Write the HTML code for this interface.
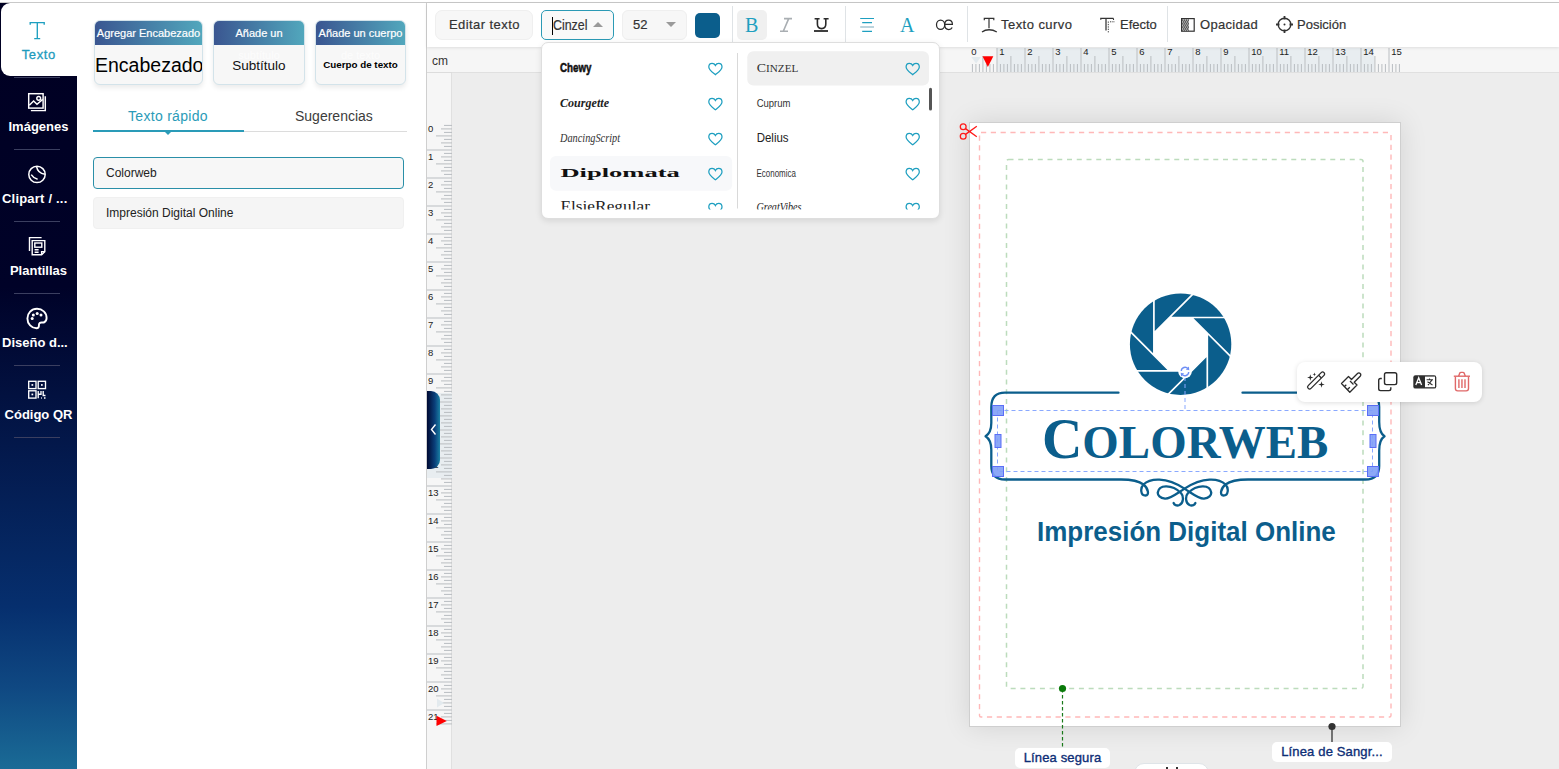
<!DOCTYPE html>
<html><head><meta charset="utf-8">
<style>
*{box-sizing:border-box;margin:0;padding:0}
html,body{width:1559px;height:769px;overflow:hidden;background:#fff;font-family:"Liberation Sans",sans-serif;position:relative}
.a{position:absolute}
#topline{left:0;top:2px;width:1559px;height:1px;background:#c9c9c9}
#sb{left:0;top:3px;width:77px;height:766px;background:linear-gradient(to bottom,#000022 0px,#000228 284px,#03184b 444px,#062f6e 604px,#0f4882 684px,#1a6b96 766px)}
#tab{left:1px;top:3px;width:76px;height:73px;background:#fff;border-radius:9px 0 0 9px}
.sep{left:14px;width:46px;height:1px;background:#3b3f60}
.lbl{left:0;width:77px;text-align:center;color:#fff;font-weight:bold;font-size:13px;white-space:nowrap}
#panel{left:77px;top:3px;width:349px;height:766px;background:#fff}
#vline{left:426px;top:3px;width:1px;height:766px;background:#cfcfcf}
#work{left:427px;top:47px;width:1132px;height:722px;background:#ededed}
#toolbar{left:427px;top:3px;width:1132px;height:44px;background:#fff;box-shadow:0 1px 3px rgba(0,0,0,.10)}

.card{top:20px;height:65px;border:1px solid #d3e3ea;border-radius:6px;background:#f7f7f7;overflow:hidden;box-shadow:0 3px 5px rgba(0,0,0,.08)}
.ch{height:25px;background:linear-gradient(to right,#3a5590,#52a8bd);color:#fff;font-size:11px;text-align:center;line-height:27px;white-space:nowrap;margin:-1px -1px 0 -1px;-webkit-text-stroke:.2px #fff}
.cb{position:relative;text-align:center;white-space:nowrap}
.ov{position:absolute;left:0;right:0;top:4px;color:#fff;opacity:.7;font-size:11px;font-weight:normal}

.tt{font-size:13px;color:#333;white-space:nowrap;line-height:15px;-webkit-text-stroke:.2px #333}
.vsep{top:6px;width:1px;height:36px;background:#dfe3e6}

.lab{background:#fff;border-radius:5px;font-size:13px;color:#0d2e76;text-align:center;line-height:20px;white-space:nowrap;letter-spacing:.15px;-webkit-text-stroke:.35px #0d2e76}
</style></head>
<body>
<div class="a" id="topline"></div>
<div class="a" id="sb"></div>
<div class="a" id="tab"></div>
<div class="a sep" style="top:77px"></div>
<div class="a sep" style="top:149px"></div>
<div class="a sep" style="top:221px"></div>
<div class="a sep" style="top:293px"></div>
<div class="a sep" style="top:365px"></div>
<div class="a sep" style="top:437px"></div>
<svg class="a" style="left:0;top:0" width="77" height="440" viewBox="0 0 77 440">
<path d="M30.2 24.8 V22.6 H44.2 V24.8 M37.3 22.6 V38.6 M34.2 38.6 H40.2" fill="none" stroke="#1e9fc0" stroke-width="1.35"/>
<g fill="none" stroke="#fff" stroke-width="1.45">
 <rect x="28.7" y="93.7" width="14.4" height="14.4"/>
 <path d="M45.3 96.2 V110.6 H30.9"/>
 <path d="M29.3 105.2 L33.6 101 L37 104.2 L42.7 99.4"/>
 <circle cx="38.7" cy="98.3" r="1.9"/>
</g>
<g fill="none" stroke="#fff" stroke-width="1.5">
 <circle cx="37" cy="174.4" r="8.2"/>
 <path d="M36.6 166.6 C37.2 170.6 40.5 173.5 44.9 174.2"/>
 <path d="M31.2 174.6 C32.6 176.8 34.9 178.5 37.6 179.2"/>
</g>
<g fill="none" stroke="#fff" stroke-width="1.4">
 <path d="M29.5 251 V237.6 H41.6"/>
 <path d="M32.2 240.6 H44.8 V251.6 L41.6 254.8 H32.2 Z"/>
 <path d="M44.8 251.6 H41.6 V254.8"/>
 <rect x="34.8" y="243" width="7" height="4.2"/>
 <path d="M34.6 249.8 H38.6 M34.6 252.2 H38.6"/>
</g>
<g fill="none" stroke="#fff" stroke-width="1.9">
 <path d="M43.8 322.5 C45.5 321.8 46.6 320.2 46.6 318 C46.6 312.5 42.3 308.8 37 308.8 C31.5 308.8 27.4 313 27.4 318.4 C27.4 323.8 31.6 328.2 36.5 328.2 C38.2 328.2 39 327.2 38.9 325.8 C38.7 323.2 40.2 322.2 42.2 322.5 Z"/>
</g>
<g fill="#fff">
 <circle cx="33.3" cy="314.9" r="1.5"/><circle cx="37.2" cy="313.6" r="1.5"/><circle cx="41" cy="314.9" r="1.5"/><circle cx="32.2" cy="318.6" r="1.5"/>
</g>
<g fill="none" stroke="#fff" stroke-width="1.35">
 <rect x="28.7" y="381.3" width="7.3" height="7.3"/>
 <rect x="38.2" y="381.3" width="7.3" height="7.3"/>
 <rect x="28.7" y="390.8" width="7.3" height="7.3"/>
 <path d="M38.2 391 V398.3 M38.2 394.2 H41 V391 M43.2 391 V395.5 H45.5 M41 398 H41.8 M44 398 H45.5"/>
</g>
<g fill="#fff"><rect x="31.5" y="384.1" width="1.7" height="1.7"/><rect x="41" y="384.1" width="1.7" height="1.7"/><rect x="31.5" y="393.6" width="1.7" height="1.7"/></g>
</svg>
<div class="a lbl" style="top:47px;color:#1e9bbd;font-weight:normal;letter-spacing:.6px;text-indent:.6px;-webkit-text-stroke:.3px #1e9bbd">Texto</div>
<div class="a lbl" style="top:119px">Imágenes</div>
<div class="a lbl" style="top:191px;text-align:left;left:2px;letter-spacing:.2px">Clipart / ...</div>
<div class="a lbl" style="top:263px">Plantillas</div>
<div class="a lbl" style="top:335px;text-align:left;left:2px">Diseño d...</div>
<div class="a lbl" style="top:407px">Código QR</div>

<div class="a" id="panel"></div>

<!-- cards -->
<div class="a card" style="left:94px;width:109px"><div class="ch">Agregar Encabezado</div><div class="cb" style="font-size:19.5px;color:#000;padding-top:9px;font-family:'Liberation Sans',sans-serif">Encabezado</div></div>
<div class="a card" style="left:213px;width:92px"><div class="ch">Añade un</div><div class="cb" style="font-size:13.5px;color:#111;padding-top:13px"><span class="ov">subtítulo</span>Subtítulo</div></div>
<div class="a card" style="left:315px;width:91px"><div class="ch">Añade un cuerpo</div><div class="cb" style="font-size:9.8px;font-weight:bold;color:#000;padding-top:14px"><span class="ov">de texto</span>Cuerpo de texto</div></div>
<!-- tabs -->
<div class="a" style="left:93px;top:131px;width:314px;height:1px;background:#dcdcdc"></div>
<div class="a" style="left:93px;top:130px;width:151px;height:2px;background:#2a9bb8"></div>
<div class="a" style="left:164px;top:131px;width:0;height:0;border-left:4px solid transparent;border-right:4px solid transparent;border-top:4px solid #2a9bb8"></div>
<div class="a" style="left:128px;top:108px;font-size:14px;letter-spacing:.3px;color:#2a9bb8">Texto rápido</div>
<div class="a" style="left:295px;top:108px;font-size:14px;color:#3c3c3c">Sugerencias</div>
<!-- inputs -->
<div class="a" style="left:93px;top:157px;width:311px;height:32px;border:1px solid #2a8fa8;border-radius:4px;background:#f7f7f7"></div>
<div class="a" style="left:106px;top:166px;font-size:12px;color:#222">Colorweb</div>
<div class="a" style="left:93px;top:197px;width:311px;height:32px;border:1px solid #f0f0f0;border-radius:4px;background:#f5f5f5"></div>
<div class="a" style="left:106px;top:206px;font-size:12px;color:#222">Impresión Digital Online</div>
<div class="a" id="vline"></div>
<div class="a" id="work"></div>
<div class="a" style="left:427px;top:47px;width:1132px;height:26px;background:#f6f6f6;border-bottom:1px solid #e0e0e0"></div>
<div class="a" style="left:997px;top:48px;width:377px;height:24px;background:#e8edf0"></div>
<div class="a" style="left:427px;top:47px;width:25px;height:26px;background:#f6f6f6;border-bottom:1px solid #dcdcdc"></div>
<div class="a" style="left:432px;top:53.5px;font-size:12px;color:#333;line-height:14px">cm</div>
<div class="a" style="left:427px;top:73px;width:25px;height:696px;background:#f6f6f6;border-right:1px solid #e0e0e0"></div>
<div class="a" style="left:427px;top:393px;width:25px;height:85px;background:#e8edf0"></div>
<svg class="a" style="left:0;top:0" width="1559" height="769" viewBox="0 0 1559 769">
<rect x="971.9" y="64" width="1" height="8" fill="#b9bdc1"/>
<rect x="975.4" y="64" width="1" height="8" fill="#b9bdc1"/>
<rect x="978.9" y="64" width="1" height="8" fill="#b9bdc1"/>
<rect x="982.4" y="56" width="1" height="16" fill="#b9bdc1"/>
<rect x="985.9" y="64" width="1" height="8" fill="#b9bdc1"/>
<rect x="989.4" y="64" width="1" height="8" fill="#b9bdc1"/>
<rect x="992.9" y="64" width="1" height="8" fill="#b9bdc1"/>
<text x="971.2" y="55" font-size="9.5" fill="#222" font-family="Liberation Sans">0</text>
<rect x="996.4" y="48" width="1.2" height="24" fill="#c4c7ca"/>
<rect x="999.9" y="64" width="1" height="8" fill="#b9bdc1"/>
<rect x="1003.4" y="64" width="1" height="8" fill="#b9bdc1"/>
<rect x="1006.9" y="64" width="1" height="8" fill="#b9bdc1"/>
<rect x="1010.4" y="56" width="1" height="16" fill="#b9bdc1"/>
<rect x="1013.9" y="64" width="1" height="8" fill="#b9bdc1"/>
<rect x="1017.4" y="64" width="1" height="8" fill="#b9bdc1"/>
<rect x="1020.9" y="64" width="1" height="8" fill="#b9bdc1"/>
<text x="999.2" y="55" font-size="9.5" fill="#222" font-family="Liberation Sans">1</text>
<rect x="1024.4" y="48" width="1.2" height="24" fill="#c4c7ca"/>
<rect x="1027.9" y="64" width="1" height="8" fill="#b9bdc1"/>
<rect x="1031.4" y="64" width="1" height="8" fill="#b9bdc1"/>
<rect x="1034.9" y="64" width="1" height="8" fill="#b9bdc1"/>
<rect x="1038.4" y="56" width="1" height="16" fill="#b9bdc1"/>
<rect x="1041.9" y="64" width="1" height="8" fill="#b9bdc1"/>
<rect x="1045.4" y="64" width="1" height="8" fill="#b9bdc1"/>
<rect x="1048.9" y="64" width="1" height="8" fill="#b9bdc1"/>
<text x="1027.2" y="55" font-size="9.5" fill="#222" font-family="Liberation Sans">2</text>
<rect x="1052.4" y="48" width="1.2" height="24" fill="#c4c7ca"/>
<rect x="1055.9" y="64" width="1" height="8" fill="#b9bdc1"/>
<rect x="1059.4" y="64" width="1" height="8" fill="#b9bdc1"/>
<rect x="1062.9" y="64" width="1" height="8" fill="#b9bdc1"/>
<rect x="1066.4" y="56" width="1" height="16" fill="#b9bdc1"/>
<rect x="1069.9" y="64" width="1" height="8" fill="#b9bdc1"/>
<rect x="1073.4" y="64" width="1" height="8" fill="#b9bdc1"/>
<rect x="1076.9" y="64" width="1" height="8" fill="#b9bdc1"/>
<text x="1055.2" y="55" font-size="9.5" fill="#222" font-family="Liberation Sans">3</text>
<rect x="1080.4" y="48" width="1.2" height="24" fill="#c4c7ca"/>
<rect x="1083.9" y="64" width="1" height="8" fill="#b9bdc1"/>
<rect x="1087.4" y="64" width="1" height="8" fill="#b9bdc1"/>
<rect x="1090.9" y="64" width="1" height="8" fill="#b9bdc1"/>
<rect x="1094.4" y="56" width="1" height="16" fill="#b9bdc1"/>
<rect x="1097.9" y="64" width="1" height="8" fill="#b9bdc1"/>
<rect x="1101.4" y="64" width="1" height="8" fill="#b9bdc1"/>
<rect x="1104.9" y="64" width="1" height="8" fill="#b9bdc1"/>
<text x="1083.2" y="55" font-size="9.5" fill="#222" font-family="Liberation Sans">4</text>
<rect x="1108.4" y="48" width="1.2" height="24" fill="#c4c7ca"/>
<rect x="1111.9" y="64" width="1" height="8" fill="#b9bdc1"/>
<rect x="1115.4" y="64" width="1" height="8" fill="#b9bdc1"/>
<rect x="1118.9" y="64" width="1" height="8" fill="#b9bdc1"/>
<rect x="1122.4" y="56" width="1" height="16" fill="#b9bdc1"/>
<rect x="1125.9" y="64" width="1" height="8" fill="#b9bdc1"/>
<rect x="1129.4" y="64" width="1" height="8" fill="#b9bdc1"/>
<rect x="1132.9" y="64" width="1" height="8" fill="#b9bdc1"/>
<text x="1111.2" y="55" font-size="9.5" fill="#222" font-family="Liberation Sans">5</text>
<rect x="1136.4" y="48" width="1.2" height="24" fill="#c4c7ca"/>
<rect x="1139.9" y="64" width="1" height="8" fill="#b9bdc1"/>
<rect x="1143.4" y="64" width="1" height="8" fill="#b9bdc1"/>
<rect x="1146.9" y="64" width="1" height="8" fill="#b9bdc1"/>
<rect x="1150.4" y="56" width="1" height="16" fill="#b9bdc1"/>
<rect x="1153.9" y="64" width="1" height="8" fill="#b9bdc1"/>
<rect x="1157.4" y="64" width="1" height="8" fill="#b9bdc1"/>
<rect x="1160.9" y="64" width="1" height="8" fill="#b9bdc1"/>
<text x="1139.2" y="55" font-size="9.5" fill="#222" font-family="Liberation Sans">6</text>
<rect x="1164.4" y="48" width="1.2" height="24" fill="#c4c7ca"/>
<rect x="1167.9" y="64" width="1" height="8" fill="#b9bdc1"/>
<rect x="1171.4" y="64" width="1" height="8" fill="#b9bdc1"/>
<rect x="1174.9" y="64" width="1" height="8" fill="#b9bdc1"/>
<rect x="1178.4" y="56" width="1" height="16" fill="#b9bdc1"/>
<rect x="1181.9" y="64" width="1" height="8" fill="#b9bdc1"/>
<rect x="1185.4" y="64" width="1" height="8" fill="#b9bdc1"/>
<rect x="1188.9" y="64" width="1" height="8" fill="#b9bdc1"/>
<text x="1167.2" y="55" font-size="9.5" fill="#222" font-family="Liberation Sans">7</text>
<rect x="1192.4" y="48" width="1.2" height="24" fill="#c4c7ca"/>
<rect x="1195.9" y="64" width="1" height="8" fill="#b9bdc1"/>
<rect x="1199.4" y="64" width="1" height="8" fill="#b9bdc1"/>
<rect x="1202.9" y="64" width="1" height="8" fill="#b9bdc1"/>
<rect x="1206.4" y="56" width="1" height="16" fill="#b9bdc1"/>
<rect x="1209.9" y="64" width="1" height="8" fill="#b9bdc1"/>
<rect x="1213.4" y="64" width="1" height="8" fill="#b9bdc1"/>
<rect x="1216.9" y="64" width="1" height="8" fill="#b9bdc1"/>
<text x="1195.2" y="55" font-size="9.5" fill="#222" font-family="Liberation Sans">8</text>
<rect x="1220.4" y="48" width="1.2" height="24" fill="#c4c7ca"/>
<rect x="1223.9" y="64" width="1" height="8" fill="#b9bdc1"/>
<rect x="1227.4" y="64" width="1" height="8" fill="#b9bdc1"/>
<rect x="1230.9" y="64" width="1" height="8" fill="#b9bdc1"/>
<rect x="1234.4" y="56" width="1" height="16" fill="#b9bdc1"/>
<rect x="1237.9" y="64" width="1" height="8" fill="#b9bdc1"/>
<rect x="1241.4" y="64" width="1" height="8" fill="#b9bdc1"/>
<rect x="1244.9" y="64" width="1" height="8" fill="#b9bdc1"/>
<text x="1223.2" y="55" font-size="9.5" fill="#222" font-family="Liberation Sans">9</text>
<rect x="1248.4" y="48" width="1.2" height="24" fill="#c4c7ca"/>
<rect x="1251.9" y="64" width="1" height="8" fill="#b9bdc1"/>
<rect x="1255.4" y="64" width="1" height="8" fill="#b9bdc1"/>
<rect x="1258.9" y="64" width="1" height="8" fill="#b9bdc1"/>
<rect x="1262.4" y="56" width="1" height="16" fill="#b9bdc1"/>
<rect x="1265.9" y="64" width="1" height="8" fill="#b9bdc1"/>
<rect x="1269.4" y="64" width="1" height="8" fill="#b9bdc1"/>
<rect x="1272.9" y="64" width="1" height="8" fill="#b9bdc1"/>
<text x="1251.2" y="55" font-size="9.5" fill="#222" font-family="Liberation Sans">10</text>
<rect x="1276.4" y="48" width="1.2" height="24" fill="#c4c7ca"/>
<rect x="1279.9" y="64" width="1" height="8" fill="#b9bdc1"/>
<rect x="1283.4" y="64" width="1" height="8" fill="#b9bdc1"/>
<rect x="1286.9" y="64" width="1" height="8" fill="#b9bdc1"/>
<rect x="1290.4" y="56" width="1" height="16" fill="#b9bdc1"/>
<rect x="1293.9" y="64" width="1" height="8" fill="#b9bdc1"/>
<rect x="1297.4" y="64" width="1" height="8" fill="#b9bdc1"/>
<rect x="1300.9" y="64" width="1" height="8" fill="#b9bdc1"/>
<text x="1279.2" y="55" font-size="9.5" fill="#222" font-family="Liberation Sans">11</text>
<rect x="1304.4" y="48" width="1.2" height="24" fill="#c4c7ca"/>
<rect x="1307.9" y="64" width="1" height="8" fill="#b9bdc1"/>
<rect x="1311.4" y="64" width="1" height="8" fill="#b9bdc1"/>
<rect x="1314.9" y="64" width="1" height="8" fill="#b9bdc1"/>
<rect x="1318.4" y="56" width="1" height="16" fill="#b9bdc1"/>
<rect x="1321.9" y="64" width="1" height="8" fill="#b9bdc1"/>
<rect x="1325.4" y="64" width="1" height="8" fill="#b9bdc1"/>
<rect x="1328.9" y="64" width="1" height="8" fill="#b9bdc1"/>
<text x="1307.2" y="55" font-size="9.5" fill="#222" font-family="Liberation Sans">12</text>
<rect x="1332.4" y="48" width="1.2" height="24" fill="#c4c7ca"/>
<rect x="1335.9" y="64" width="1" height="8" fill="#b9bdc1"/>
<rect x="1339.4" y="64" width="1" height="8" fill="#b9bdc1"/>
<rect x="1342.9" y="64" width="1" height="8" fill="#b9bdc1"/>
<rect x="1346.4" y="56" width="1" height="16" fill="#b9bdc1"/>
<rect x="1349.9" y="64" width="1" height="8" fill="#b9bdc1"/>
<rect x="1353.4" y="64" width="1" height="8" fill="#b9bdc1"/>
<rect x="1356.9" y="64" width="1" height="8" fill="#b9bdc1"/>
<text x="1335.2" y="55" font-size="9.5" fill="#222" font-family="Liberation Sans">13</text>
<rect x="1360.4" y="48" width="1.2" height="24" fill="#c4c7ca"/>
<rect x="1363.9" y="64" width="1" height="8" fill="#b9bdc1"/>
<rect x="1367.4" y="64" width="1" height="8" fill="#b9bdc1"/>
<rect x="1370.9" y="64" width="1" height="8" fill="#b9bdc1"/>
<rect x="1374.4" y="56" width="1" height="16" fill="#b9bdc1"/>
<rect x="1377.9" y="64" width="1" height="8" fill="#b9bdc1"/>
<rect x="1381.4" y="64" width="1" height="8" fill="#b9bdc1"/>
<rect x="1384.9" y="64" width="1" height="8" fill="#b9bdc1"/>
<text x="1363.2" y="55" font-size="9.5" fill="#222" font-family="Liberation Sans">14</text>
<rect x="1388.4" y="48" width="1.2" height="24" fill="#c4c7ca"/>
<rect x="1391.9" y="64" width="1" height="8" fill="#b9bdc1"/>
<rect x="1395.4" y="64" width="1" height="8" fill="#b9bdc1"/>
<rect x="1398.9" y="64" width="1" height="8" fill="#b9bdc1"/>
<text x="1391.2" y="55" font-size="9.5" fill="#222" font-family="Liberation Sans">15</text>
<rect x="444" y="124.9" width="8" height="1" fill="#b9bdc1"/>
<rect x="441" y="128.4" width="11" height="1" fill="#b9bdc1"/>
<rect x="444" y="131.9" width="8" height="1" fill="#b9bdc1"/>
<rect x="436" y="135.4" width="16" height="1" fill="#b9bdc1"/>
<rect x="444" y="138.9" width="8" height="1" fill="#b9bdc1"/>
<rect x="441" y="142.4" width="11" height="1" fill="#b9bdc1"/>
<rect x="444" y="145.9" width="8" height="1" fill="#b9bdc1"/>
<text x="428" y="131.7" font-size="9.5" fill="#222" font-family="Liberation Sans">0</text>
<rect x="427" y="149.4" width="25" height="1.2" fill="#c4c7ca"/>
<rect x="444" y="152.9" width="8" height="1" fill="#b9bdc1"/>
<rect x="441" y="156.4" width="11" height="1" fill="#b9bdc1"/>
<rect x="444" y="159.9" width="8" height="1" fill="#b9bdc1"/>
<rect x="436" y="163.4" width="16" height="1" fill="#b9bdc1"/>
<rect x="444" y="166.9" width="8" height="1" fill="#b9bdc1"/>
<rect x="441" y="170.4" width="11" height="1" fill="#b9bdc1"/>
<rect x="444" y="173.9" width="8" height="1" fill="#b9bdc1"/>
<text x="428" y="159.7" font-size="9.5" fill="#222" font-family="Liberation Sans">1</text>
<rect x="427" y="177.4" width="25" height="1.2" fill="#c4c7ca"/>
<rect x="444" y="180.9" width="8" height="1" fill="#b9bdc1"/>
<rect x="441" y="184.4" width="11" height="1" fill="#b9bdc1"/>
<rect x="444" y="187.9" width="8" height="1" fill="#b9bdc1"/>
<rect x="436" y="191.4" width="16" height="1" fill="#b9bdc1"/>
<rect x="444" y="194.9" width="8" height="1" fill="#b9bdc1"/>
<rect x="441" y="198.4" width="11" height="1" fill="#b9bdc1"/>
<rect x="444" y="201.9" width="8" height="1" fill="#b9bdc1"/>
<text x="428" y="187.7" font-size="9.5" fill="#222" font-family="Liberation Sans">2</text>
<rect x="427" y="205.4" width="25" height="1.2" fill="#c4c7ca"/>
<rect x="444" y="208.9" width="8" height="1" fill="#b9bdc1"/>
<rect x="441" y="212.4" width="11" height="1" fill="#b9bdc1"/>
<rect x="444" y="215.9" width="8" height="1" fill="#b9bdc1"/>
<rect x="436" y="219.4" width="16" height="1" fill="#b9bdc1"/>
<rect x="444" y="222.9" width="8" height="1" fill="#b9bdc1"/>
<rect x="441" y="226.4" width="11" height="1" fill="#b9bdc1"/>
<rect x="444" y="229.9" width="8" height="1" fill="#b9bdc1"/>
<text x="428" y="215.7" font-size="9.5" fill="#222" font-family="Liberation Sans">3</text>
<rect x="427" y="233.4" width="25" height="1.2" fill="#c4c7ca"/>
<rect x="444" y="236.9" width="8" height="1" fill="#b9bdc1"/>
<rect x="441" y="240.4" width="11" height="1" fill="#b9bdc1"/>
<rect x="444" y="243.9" width="8" height="1" fill="#b9bdc1"/>
<rect x="436" y="247.4" width="16" height="1" fill="#b9bdc1"/>
<rect x="444" y="250.9" width="8" height="1" fill="#b9bdc1"/>
<rect x="441" y="254.4" width="11" height="1" fill="#b9bdc1"/>
<rect x="444" y="257.9" width="8" height="1" fill="#b9bdc1"/>
<text x="428" y="243.7" font-size="9.5" fill="#222" font-family="Liberation Sans">4</text>
<rect x="427" y="261.4" width="25" height="1.2" fill="#c4c7ca"/>
<rect x="444" y="264.9" width="8" height="1" fill="#b9bdc1"/>
<rect x="441" y="268.4" width="11" height="1" fill="#b9bdc1"/>
<rect x="444" y="271.9" width="8" height="1" fill="#b9bdc1"/>
<rect x="436" y="275.4" width="16" height="1" fill="#b9bdc1"/>
<rect x="444" y="278.9" width="8" height="1" fill="#b9bdc1"/>
<rect x="441" y="282.4" width="11" height="1" fill="#b9bdc1"/>
<rect x="444" y="285.9" width="8" height="1" fill="#b9bdc1"/>
<text x="428" y="271.7" font-size="9.5" fill="#222" font-family="Liberation Sans">5</text>
<rect x="427" y="289.4" width="25" height="1.2" fill="#c4c7ca"/>
<rect x="444" y="292.9" width="8" height="1" fill="#b9bdc1"/>
<rect x="441" y="296.4" width="11" height="1" fill="#b9bdc1"/>
<rect x="444" y="299.9" width="8" height="1" fill="#b9bdc1"/>
<rect x="436" y="303.4" width="16" height="1" fill="#b9bdc1"/>
<rect x="444" y="306.9" width="8" height="1" fill="#b9bdc1"/>
<rect x="441" y="310.4" width="11" height="1" fill="#b9bdc1"/>
<rect x="444" y="313.9" width="8" height="1" fill="#b9bdc1"/>
<text x="428" y="299.7" font-size="9.5" fill="#222" font-family="Liberation Sans">6</text>
<rect x="427" y="317.4" width="25" height="1.2" fill="#c4c7ca"/>
<rect x="444" y="320.9" width="8" height="1" fill="#b9bdc1"/>
<rect x="441" y="324.4" width="11" height="1" fill="#b9bdc1"/>
<rect x="444" y="327.9" width="8" height="1" fill="#b9bdc1"/>
<rect x="436" y="331.4" width="16" height="1" fill="#b9bdc1"/>
<rect x="444" y="334.9" width="8" height="1" fill="#b9bdc1"/>
<rect x="441" y="338.4" width="11" height="1" fill="#b9bdc1"/>
<rect x="444" y="341.9" width="8" height="1" fill="#b9bdc1"/>
<text x="428" y="327.7" font-size="9.5" fill="#222" font-family="Liberation Sans">7</text>
<rect x="427" y="345.4" width="25" height="1.2" fill="#c4c7ca"/>
<rect x="444" y="348.9" width="8" height="1" fill="#b9bdc1"/>
<rect x="441" y="352.4" width="11" height="1" fill="#b9bdc1"/>
<rect x="444" y="355.9" width="8" height="1" fill="#b9bdc1"/>
<rect x="436" y="359.4" width="16" height="1" fill="#b9bdc1"/>
<rect x="444" y="362.9" width="8" height="1" fill="#b9bdc1"/>
<rect x="441" y="366.4" width="11" height="1" fill="#b9bdc1"/>
<rect x="444" y="369.9" width="8" height="1" fill="#b9bdc1"/>
<text x="428" y="355.7" font-size="9.5" fill="#222" font-family="Liberation Sans">8</text>
<rect x="427" y="373.4" width="25" height="1.2" fill="#c4c7ca"/>
<rect x="444" y="376.9" width="8" height="1" fill="#b9bdc1"/>
<rect x="441" y="380.4" width="11" height="1" fill="#b9bdc1"/>
<rect x="444" y="383.9" width="8" height="1" fill="#b9bdc1"/>
<rect x="436" y="387.4" width="16" height="1" fill="#b9bdc1"/>
<rect x="444" y="390.9" width="8" height="1" fill="#b9bdc1"/>
<rect x="441" y="394.4" width="11" height="1" fill="#b9bdc1"/>
<rect x="444" y="397.9" width="8" height="1" fill="#b9bdc1"/>
<text x="428" y="383.7" font-size="9.5" fill="#222" font-family="Liberation Sans">9</text>
<rect x="427" y="401.4" width="25" height="1.2" fill="#c4c7ca"/>
<rect x="444" y="404.9" width="8" height="1" fill="#b9bdc1"/>
<rect x="441" y="408.4" width="11" height="1" fill="#b9bdc1"/>
<rect x="444" y="411.9" width="8" height="1" fill="#b9bdc1"/>
<rect x="436" y="415.4" width="16" height="1" fill="#b9bdc1"/>
<rect x="444" y="418.9" width="8" height="1" fill="#b9bdc1"/>
<rect x="441" y="422.4" width="11" height="1" fill="#b9bdc1"/>
<rect x="444" y="425.9" width="8" height="1" fill="#b9bdc1"/>
<text x="428" y="411.7" font-size="9.5" fill="#222" font-family="Liberation Sans">10</text>
<rect x="427" y="429.4" width="25" height="1.2" fill="#c4c7ca"/>
<rect x="444" y="432.9" width="8" height="1" fill="#b9bdc1"/>
<rect x="441" y="436.4" width="11" height="1" fill="#b9bdc1"/>
<rect x="444" y="439.9" width="8" height="1" fill="#b9bdc1"/>
<rect x="436" y="443.4" width="16" height="1" fill="#b9bdc1"/>
<rect x="444" y="446.9" width="8" height="1" fill="#b9bdc1"/>
<rect x="441" y="450.4" width="11" height="1" fill="#b9bdc1"/>
<rect x="444" y="453.9" width="8" height="1" fill="#b9bdc1"/>
<text x="428" y="439.7" font-size="9.5" fill="#222" font-family="Liberation Sans">11</text>
<rect x="427" y="457.4" width="25" height="1.2" fill="#c4c7ca"/>
<rect x="444" y="460.9" width="8" height="1" fill="#b9bdc1"/>
<rect x="441" y="464.4" width="11" height="1" fill="#b9bdc1"/>
<rect x="444" y="467.9" width="8" height="1" fill="#b9bdc1"/>
<rect x="436" y="471.4" width="16" height="1" fill="#b9bdc1"/>
<rect x="444" y="474.9" width="8" height="1" fill="#b9bdc1"/>
<rect x="441" y="478.4" width="11" height="1" fill="#b9bdc1"/>
<rect x="444" y="481.9" width="8" height="1" fill="#b9bdc1"/>
<text x="428" y="467.7" font-size="9.5" fill="#222" font-family="Liberation Sans">12</text>
<rect x="427" y="485.4" width="25" height="1.2" fill="#c4c7ca"/>
<rect x="444" y="488.9" width="8" height="1" fill="#b9bdc1"/>
<rect x="441" y="492.4" width="11" height="1" fill="#b9bdc1"/>
<rect x="444" y="495.9" width="8" height="1" fill="#b9bdc1"/>
<rect x="436" y="499.4" width="16" height="1" fill="#b9bdc1"/>
<rect x="444" y="502.9" width="8" height="1" fill="#b9bdc1"/>
<rect x="441" y="506.4" width="11" height="1" fill="#b9bdc1"/>
<rect x="444" y="509.9" width="8" height="1" fill="#b9bdc1"/>
<text x="428" y="495.7" font-size="9.5" fill="#222" font-family="Liberation Sans">13</text>
<rect x="427" y="513.4" width="25" height="1.2" fill="#c4c7ca"/>
<rect x="444" y="516.9" width="8" height="1" fill="#b9bdc1"/>
<rect x="441" y="520.4" width="11" height="1" fill="#b9bdc1"/>
<rect x="444" y="523.9" width="8" height="1" fill="#b9bdc1"/>
<rect x="436" y="527.4" width="16" height="1" fill="#b9bdc1"/>
<rect x="444" y="530.9" width="8" height="1" fill="#b9bdc1"/>
<rect x="441" y="534.4" width="11" height="1" fill="#b9bdc1"/>
<rect x="444" y="537.9" width="8" height="1" fill="#b9bdc1"/>
<text x="428" y="523.7" font-size="9.5" fill="#222" font-family="Liberation Sans">14</text>
<rect x="427" y="541.4" width="25" height="1.2" fill="#c4c7ca"/>
<rect x="444" y="544.9" width="8" height="1" fill="#b9bdc1"/>
<rect x="441" y="548.4" width="11" height="1" fill="#b9bdc1"/>
<rect x="444" y="551.9" width="8" height="1" fill="#b9bdc1"/>
<rect x="436" y="555.4" width="16" height="1" fill="#b9bdc1"/>
<rect x="444" y="558.9" width="8" height="1" fill="#b9bdc1"/>
<rect x="441" y="562.4" width="11" height="1" fill="#b9bdc1"/>
<rect x="444" y="565.9" width="8" height="1" fill="#b9bdc1"/>
<text x="428" y="551.7" font-size="9.5" fill="#222" font-family="Liberation Sans">15</text>
<rect x="427" y="569.4" width="25" height="1.2" fill="#c4c7ca"/>
<rect x="444" y="572.9" width="8" height="1" fill="#b9bdc1"/>
<rect x="441" y="576.4" width="11" height="1" fill="#b9bdc1"/>
<rect x="444" y="579.9" width="8" height="1" fill="#b9bdc1"/>
<rect x="436" y="583.4" width="16" height="1" fill="#b9bdc1"/>
<rect x="444" y="586.9" width="8" height="1" fill="#b9bdc1"/>
<rect x="441" y="590.4" width="11" height="1" fill="#b9bdc1"/>
<rect x="444" y="593.9" width="8" height="1" fill="#b9bdc1"/>
<text x="428" y="579.7" font-size="9.5" fill="#222" font-family="Liberation Sans">16</text>
<rect x="427" y="597.4" width="25" height="1.2" fill="#c4c7ca"/>
<rect x="444" y="600.9" width="8" height="1" fill="#b9bdc1"/>
<rect x="441" y="604.4" width="11" height="1" fill="#b9bdc1"/>
<rect x="444" y="607.9" width="8" height="1" fill="#b9bdc1"/>
<rect x="436" y="611.4" width="16" height="1" fill="#b9bdc1"/>
<rect x="444" y="614.9" width="8" height="1" fill="#b9bdc1"/>
<rect x="441" y="618.4" width="11" height="1" fill="#b9bdc1"/>
<rect x="444" y="621.9" width="8" height="1" fill="#b9bdc1"/>
<text x="428" y="607.7" font-size="9.5" fill="#222" font-family="Liberation Sans">17</text>
<rect x="427" y="625.4" width="25" height="1.2" fill="#c4c7ca"/>
<rect x="444" y="628.9" width="8" height="1" fill="#b9bdc1"/>
<rect x="441" y="632.4" width="11" height="1" fill="#b9bdc1"/>
<rect x="444" y="635.9" width="8" height="1" fill="#b9bdc1"/>
<rect x="436" y="639.4" width="16" height="1" fill="#b9bdc1"/>
<rect x="444" y="642.9" width="8" height="1" fill="#b9bdc1"/>
<rect x="441" y="646.4" width="11" height="1" fill="#b9bdc1"/>
<rect x="444" y="649.9" width="8" height="1" fill="#b9bdc1"/>
<text x="428" y="635.7" font-size="9.5" fill="#222" font-family="Liberation Sans">18</text>
<rect x="427" y="653.4" width="25" height="1.2" fill="#c4c7ca"/>
<rect x="444" y="656.9" width="8" height="1" fill="#b9bdc1"/>
<rect x="441" y="660.4" width="11" height="1" fill="#b9bdc1"/>
<rect x="444" y="663.9" width="8" height="1" fill="#b9bdc1"/>
<rect x="436" y="667.4" width="16" height="1" fill="#b9bdc1"/>
<rect x="444" y="670.9" width="8" height="1" fill="#b9bdc1"/>
<rect x="441" y="674.4" width="11" height="1" fill="#b9bdc1"/>
<rect x="444" y="677.9" width="8" height="1" fill="#b9bdc1"/>
<text x="428" y="663.7" font-size="9.5" fill="#222" font-family="Liberation Sans">19</text>
<rect x="427" y="681.4" width="25" height="1.2" fill="#c4c7ca"/>
<rect x="444" y="684.9" width="8" height="1" fill="#b9bdc1"/>
<rect x="441" y="688.4" width="11" height="1" fill="#b9bdc1"/>
<rect x="444" y="691.9" width="8" height="1" fill="#b9bdc1"/>
<rect x="436" y="695.4" width="16" height="1" fill="#b9bdc1"/>
<rect x="444" y="698.9" width="8" height="1" fill="#b9bdc1"/>
<rect x="441" y="702.4" width="11" height="1" fill="#b9bdc1"/>
<rect x="444" y="705.9" width="8" height="1" fill="#b9bdc1"/>
<text x="428" y="691.7" font-size="9.5" fill="#222" font-family="Liberation Sans">20</text>
<rect x="427" y="709.4" width="25" height="1.2" fill="#c4c7ca"/>
<rect x="444" y="712.9" width="8" height="1" fill="#b9bdc1"/>
<rect x="441" y="716.4" width="11" height="1" fill="#b9bdc1"/>
<rect x="444" y="719.9" width="8" height="1" fill="#b9bdc1"/>
<rect x="436" y="723.4" width="16" height="1" fill="#b9bdc1"/>



<text x="428" y="719.7" font-size="9.5" fill="#222" font-family="Liberation Sans">21</text>









<path d="M971.3 57 H980.9 L976.1 63.5 Z" fill="#e3eaee"/>
<path d="M982.5 56.3 H993.3 L987.9 66.9 Z" fill="#ff0000"/>
<path d="M437 698.5 V707.5 L444 703 Z" fill="#e3eaee"/>
<path d="M436.5 715.8 V726 L446.8 720.9 Z" fill="#ff0000"/>
</svg>
<div class="a" style="left:427px;top:391px;width:13px;height:78px;border-radius:0 9px 9px 0;background:linear-gradient(to right,#000a33,#0a3f7a 60%,#1a7fa3)"></div>
<svg class="a" style="left:427px;top:420px" width="13" height="20" viewBox="0 0 13 20"><path d="M8.5 4.5 L4.5 9.5 L8.5 14.5" fill="none" stroke="#fff" stroke-width="1.4"/></svg>
<div class="a" style="left:969px;top:122px;width:432px;height:605px;background:#fff;border:1px solid #cfcfcf;box-shadow:0 0 26px rgba(0,0,0,.11)"></div>
<div class="a" id="toolbar"></div>

<svg class="a" style="left:0;top:0" width="1559" height="769" viewBox="0 0 1559 769">
<rect x="979.5" y="132.5" width="411.5" height="584.5" rx="1.5" fill="none" stroke="#ffb8b8" stroke-width="1.4" stroke-dasharray="5.2 4.6"/>
<rect x="1006.5" y="159.5" width="356.5" height="529" rx="2" fill="none" stroke="#bcdcbc" stroke-width="1.5" stroke-dasharray="5 4.75"/>
<!-- scissors -->
<g fill="none" stroke="#ff1a1a" stroke-width="1.3">
<circle cx="963.2" cy="126.8" r="2.9"/><circle cx="963.2" cy="136.2" r="2.9"/>
<path d="M965.5 128.6 L976.8 136.8 M965.5 134.4 L976.8 126.2"/>
</g>
<circle cx="1180.6" cy="344.2" r="50.7" fill="#0b5e8c"/>
<polygon points="1169.54,317.50 1191.66,317.50 1207.30,333.14 1207.30,355.26 1191.66,370.90 1169.54,370.90 1153.90,355.26 1153.90,333.14" fill="#fff"/>
<path d="M1169.54 317.50 L1225.70 317.50 M1191.66 317.50 L1231.37 357.21 M1207.30 333.14 L1207.30 389.30 M1207.30 355.26 L1167.59 394.97 M1191.66 370.90 L1135.50 370.90 M1169.54 370.90 L1129.83 331.19 M1153.90 355.26 L1153.90 299.10 M1153.90 333.14 L1193.61 293.43" stroke="#fff" stroke-width="1.7" fill="none"/>
<path d="M1118.5 392.7 L1005 392.7 C996 392.7 991.3 397 991.3 407 L991.3 423 C991.3 431 988.2 434.6 985.6 436.3 C988.2 438 991.3 441.6 991.3 449.5 L991.3 466 C991.3 475 996 479.5 1005 479.5 M1005 479.5 L1121 479.5 C1131 479.5 1139 481 1143.5 484.5 C1140 488 1140.5 495.5 1145.5 495.5 C1149.5 495.5 1148.5 488.5 1143.5 484.5 M1143.5 484.5 C1150 478 1166 476.5 1184.5 488.6 M1184.5 488.6 C1176 494 1170 499 1165 498.6 C1160 498.2 1157.5 495.2 1157.8 492.5 C1158.2 489 1161 486.4 1166 486.3 C1172 486.2 1178 490 1181 493 C1184 496.5 1183.5 503 1179.5 505 C1176.5 506.3 1174.3 504.8 1173.6 503" fill="none" stroke="#0b5e8c" stroke-width="2.3" stroke-linecap="round" stroke-linejoin="round"/>
<path d="M 1242.5 392.7 L 1365.5 392.7 C 1374.5 392.7 1379.2 397.0 1379.2 407.0 L 1379.2 422.0 C 1379.2 430.5 1381.9 434.6 1384.5 436.3 C 1381.9 438.0 1379.2 442.1 1379.2 450.5 L 1379.2 466.0 C 1379.2 475.0 1374.5 479.5 1365.5 479.5 M 1365.5 479.5 L 1248.0 479.5 C 1238.0 479.5 1230.0 481.0 1225.5 484.5 C 1229.0 488.0 1228.5 495.5 1223.5 495.5 C 1219.5 495.5 1220.5 488.5 1225.5 484.5 M 1225.5 484.5 C 1219.0 478.0 1203.0 476.5 1184.5 488.6 M 1184.5 488.6 C 1193.0 494.0 1199.0 499.0 1204.0 498.6 C 1209.0 498.2 1211.5 495.2 1211.2 492.5 C 1210.8 489.0 1208.0 486.4 1203.0 486.3 C 1197.0 486.2 1191.0 490.0 1188.0 493.0 C 1185.0 496.5 1185.5 503.0 1189.5 505.0 C 1192.5 506.3 1194.7 504.8 1195.4 503.0" fill="none" stroke="#0b5e8c" stroke-width="2.3" stroke-linecap="round" stroke-linejoin="round"/>
<!-- selection -->
<g fill="none" stroke="#8aa9ff" stroke-width="1" stroke-dasharray="4 3">
<rect x="997.5" y="410.5" width="375" height="61"/>
<path d="M1185 377 V410"/>
</g>
<g fill="#7f9ef7" fill-opacity=".9" stroke="#5b6ff7" stroke-width="1">
<rect x="992.5" y="405.5" width="11" height="10"/>
<rect x="992.5" y="466.5" width="11" height="10"/>
<rect x="1367.5" y="405.5" width="11" height="10"/>
<rect x="1367.5" y="466.5" width="11" height="10"/>
<rect x="995" y="434.5" width="6" height="13"/>
<rect x="1370" y="434.5" width="6" height="13"/>
</g>
<circle cx="1185" cy="371.5" r="6.8" fill="#fff"/>
<g fill="none" stroke="#6f8ff5" stroke-width="1.4">
<path d="M1181.3 371 A3.8 3.8 0 0 1 1188 368.6"/>
<path d="M1188.7 372 A3.8 3.8 0 0 1 1182 374.4"/>
</g>
<path d="M1188.9 366.5 L1189.3 370.2 L1185.8 369.6 Z M1181.1 376.5 L1180.7 372.8 L1184.2 373.4 Z" fill="#6f8ff5"/>
<!-- label lines -->
<path d="M1062.5 689 V748" stroke="#1a7a1a" stroke-width="1.2" stroke-dasharray="3.5 2.5"/>
<circle cx="1062.5" cy="688.5" r="3.6" fill="#0a7a0a"/>
<path d="M1332 727 V743" stroke="#333" stroke-width="1.3"/>
<circle cx="1332" cy="726.5" r="3.6" fill="#333"/>
</svg>
<div class="a" style="left:1042px;top:409px;white-space:nowrap;font-family:'Liberation Serif',serif;font-weight:bold;color:#0b5e8c;transform:scaleX(.998);transform-origin:0 0;line-height:60px"><span style="font-size:56px">C</span><span style="font-size:47px">OLORWEB</span></div>
<div class="a" style="left:1037px;top:517px;white-space:nowrap;font-weight:bold;font-size:27px;color:#0b5e8c;line-height:30px;transform:scaleX(.962);transform-origin:0 0">Impresión Digital Online</div>
<div class="a lab" style="left:1015px;top:748px;width:95px;height:20px">Línea segura</div>
<div class="a lab" style="left:1272px;top:742px;width:120px;height:20px">Línea de Sangr...</div>
<div class="a" style="left:1134px;top:763px;width:75px;height:20px;background:#fff;border:1px solid #dfe4e8;border-radius:10px"></div><div class="a" style="left:1166px;top:767px;width:2px;height:2px;background:#333"></div><div class="a" style="left:1176px;top:767px;width:2px;height:2px;background:#333"></div>
<!-- floating toolbar -->
<div class="a" style="left:1297px;top:362px;width:185px;height:40px;background:#fff;border-radius:8px;box-shadow:0 1px 5px rgba(0,0,0,.13)"></div>

<svg class="a" style="left:1297px;top:362px" width="185" height="40" viewBox="1297 362 185 40">
<g fill="none" stroke="#2b2b2b" stroke-width="1.3" stroke-linejoin="round">
 <path d="M1308.2 385.6 L1321.2 372.6 C1322 371.8 1323.2 371.8 1324 372.6 C1324.8 373.4 1324.8 374.6 1324 375.4 L1311 388.4 C1310.2 389.2 1309 389.2 1308.2 388.4 C1307.4 387.6 1307.4 386.4 1308.2 385.6 Z"/>
 <path d="M1318.6 375.2 L1321.4 378"/>
</g>
<g fill="#2b2b2b">
 <path d="M1310.3 374.3 L1311 376.8 L1313.5 377.5 L1311 378.2 L1310.3 380.7 L1309.6 378.2 L1307.1 377.5 L1309.6 376.8 Z"/>
 <path d="M1314.4 372.6 L1314.9 374 L1316.2 374.4 L1314.9 374.8 L1314.4 376.2 L1313.9 374.8 L1312.6 374.4 L1313.9 374 Z"/>
 <path d="M1321.5 381.3 L1322.2 383.8 L1324.7 384.5 L1322.2 385.2 L1321.5 387.7 L1320.8 385.2 L1318.3 384.5 L1320.8 383.8 Z"/>
</g>
<g fill="none" stroke="#2b2b2b" stroke-width="1.3" stroke-linejoin="round">
 <path d="M1341.5 383.5 L1348.5 376.5 L1351.5 379.5 L1357.5 373.5 C1358.3 372.7 1359.5 372.7 1360.2 373.5 C1361 374.3 1361 375.4 1360.2 376.2 L1354.2 382.2 L1357 385 L1349.8 392.2 Z"/>
 <path d="M1344.5 386.5 L1346.3 384.8 M1347.5 389.5 L1349.8 387.2 M1350 381 L1353.5 384.5"/>
</g>
<g fill="none" stroke="#2b2b2b" stroke-width="1.4" stroke-linejoin="round">
 <rect x="1384.5" y="372.8" width="12.2" height="11.8" rx="1.8"/>
 <path d="M1381.8 378.5 H1380.5 C1379.4 378.5 1378.7 379.2 1378.7 380.3 V388.8 C1378.7 389.9 1379.4 390.6 1380.5 390.6 H1389 C1390.1 390.6 1390.8 389.9 1390.8 388.8 V387.2"/>
</g>
<rect x="1413.3" y="375.2" width="23" height="13.4" rx="2.2" fill="#2e2e2e"/>
<rect x="1425" y="376.6" width="10" height="10.6" fill="#fff"/>
<path d="M1415.8 385 L1418.7 377.8 L1421.6 385 M1416.8 382.6 H1420.6" fill="none" stroke="#fff" stroke-width="1.3"/>
<path d="M1426.6 379.8 H1433 M1432 379.8 L1428 385.2 M1427.5 381.8 L1432.5 385 M1429.5 378.6 V379.8" fill="none" stroke="#2e2e2e" stroke-width="1.1"/>
<g fill="none" stroke="#e06868" stroke-width="1.4" stroke-linejoin="round">
 <path d="M1453.8 376.2 H1470"/>
 <path d="M1458.6 376.2 L1459.6 373.4 C1459.9 372.7 1460.4 372.4 1461.1 372.4 H1462.8 C1463.5 372.4 1464 372.7 1464.3 373.4 L1465.3 376.2"/>
 <path d="M1455.4 376.8 V388.6 C1455.4 390 1456.3 390.9 1457.7 390.9 H1466.2 C1467.6 390.9 1468.5 390 1468.5 388.6 V376.8"/>
 <path d="M1458.9 379.3 V388 M1461.95 379.3 V388 M1465 379.3 V388"/>
</g>
</svg>
<!-- toolbar -->
<div class="a" style="left:435px;top:10px;width:98px;height:30px;background:#f7f7f7;border:1px solid #efefef;border-radius:7px"></div>
<div class="a tt" style="left:449px;top:17px;letter-spacing:.43px">Editar texto</div>
<div class="a" style="left:541px;top:10px;width:73px;height:30px;background:#f9f9f9;border:1.5px solid #2b9ab5;border-radius:5px"></div>
<div class="a" style="left:552px;top:17px;width:1px;height:18px;background:#000"></div>
<div class="a tt" style="left:553px;top:17.5px;font-size:14px;transform:scaleX(.885);transform-origin:0 0">Cinzel</div>
<div class="a" style="left:593px;top:22px;width:0;height:0;border-left:5px solid transparent;border-right:5px solid transparent;border-bottom:5px solid #9a9a9a"></div>
<div class="a" style="left:622px;top:10px;width:65px;height:30px;background:#f7f7f7;border:1px solid #efefef;border-radius:6px"></div>
<div class="a tt" style="left:633px;top:17px;font-size:13px">52</div>
<div class="a" style="left:666px;top:22px;width:0;height:0;border-left:5px solid transparent;border-right:5px solid transparent;border-top:5px solid #9a9a9a"></div>
<div class="a" style="left:695px;top:13px;width:25px;height:25px;background:#0b5e8c;border-radius:5px"></div>
<div class="a vsep" style="left:732px"></div>
<div class="a" style="left:737px;top:10px;width:30px;height:30px;background:#f0f0f0;border-radius:5px"></div>
<div class="a" style="left:745px;top:12px;font-family:'Liberation Serif',serif;font-size:20px;color:#1e9fc0;line-height:26px">B</div>
<svg class="a" style="left:770px;top:10px" width="70" height="30" viewBox="770 10 70 30">
 <path d="M784 18.6 H792 M780 31.2 H788 M788.7 18.6 L783.3 31.2" fill="none" stroke="#a9aeb2" stroke-width="1.6"/>
 <path d="M814.6 18.7 H819.6 M823.6 18.7 H828.6 M817.4 18.7 V24 C817.4 27 819 28.6 821.6 28.6 C824.2 28.6 825.8 27 825.8 24 V18.7" fill="none" stroke="#2a2a2a" stroke-width="1.6"/>
 <path d="M814 31 H828" stroke="#2a2a2a" stroke-width="1.8"/>
</svg>
<div class="a vsep" style="left:845px"></div>
<svg class="a" style="left:855px;top:12px" width="110" height="26" viewBox="0 0 110 26">
 <path d="M5.2 6.5 H19 M7.2 10.6 H17 M7.2 19.4 H17" stroke="#1e9fc0" stroke-width="1.1"/><path d="M5.2 15 H19" stroke="#8fb8c6" stroke-width="1.2"/>
 
</svg>
<div class="a" style="left:900px;top:12px;font-family:'Liberation Serif',serif;font-size:20px;color:#1e9fc0;line-height:26px">A</div>
<svg class="a" style="left:930px;top:14px" width="28" height="22" viewBox="930 14 28 22">
 <ellipse cx="940.6" cy="24.8" rx="4.1" ry="4.7" fill="none" stroke="#2a2a2a" stroke-width="1.25"/>
 <path d="M944.7 24.4 H952.4 C952.4 21.6 950.8 20.1 948.6 20.1 C946.2 20.1 944.7 22.2 944.7 24.8 C944.7 27.6 946.4 29.5 948.8 29.5 C950.4 29.5 951.6 28.7 952.2 27.4" fill="none" stroke="#2a2a2a" stroke-width="1.25"/>
</svg>
<div class="a vsep" style="left:967px"></div>
<svg class="a" style="left:978px;top:12px" width="22" height="24" viewBox="978 12 22 24">
 <path d="M984.3 20.2 V18.4 H993.8 V20.2 M989 18.4 V28.2" fill="none" stroke="#333" stroke-width="1.2"/>
 <path d="M982 32 C986 29 992 29 996.8 32" fill="none" stroke="#333" stroke-width="1.3"/>
</svg>
<div class="a tt" style="left:1001px;top:17px;letter-spacing:.45px">Texto curvo</div>
<svg class="a" style="left:1098px;top:12px" width="20" height="24" viewBox="1098 12 20 24">
 <path d="M1100.8 19.8 V18.4 H1113.5 M1106 18.4 V30.5" fill="none" stroke="#333" stroke-width="1.25"/>
 <path d="M1108.3 21.5 V33" fill="none" stroke="#444" stroke-width="1" stroke-dasharray="1.3 1.1"/>
 <path d="M1110 21.8 H1115" fill="none" stroke="#444" stroke-width="1" stroke-dasharray="1.3 1"/>
 <path d="M1113.5 18.4 V20" fill="none" stroke="#333" stroke-width="1.1"/>
</svg>
<div class="a tt" style="left:1120px;top:17px">Efecto</div>
<div class="a vsep" style="left:1167px"></div>
<svg class="a" style="left:1178px;top:14px" width="20" height="20" viewBox="1178 14 20 20">
 <rect x="1181.6" y="18.6" width="12.6" height="12.6" fill="none" stroke="#333" stroke-width="1.2"/>
 <rect x="1182.2" y="19.2" width="6.7" height="11.4" fill="#aaa"/>
 <rect x="1182.20" y="19.30" width="0.95" height="1.75" fill="#555"/><rect x="1182.20" y="22.80" width="0.95" height="1.75" fill="#555"/><rect x="1182.20" y="26.30" width="0.95" height="1.75" fill="#555"/><rect x="1182.20" y="29.80" width="0.95" height="1.75" fill="#555"/><rect x="1183.15" y="21.05" width="0.95" height="1.75" fill="#555"/><rect x="1183.15" y="24.55" width="0.95" height="1.75" fill="#555"/><rect x="1183.15" y="28.05" width="0.95" height="1.75" fill="#555"/><rect x="1184.10" y="19.30" width="0.95" height="1.75" fill="#555"/><rect x="1184.10" y="22.80" width="0.95" height="1.75" fill="#555"/><rect x="1184.10" y="26.30" width="0.95" height="1.75" fill="#555"/><rect x="1184.10" y="29.80" width="0.95" height="1.75" fill="#555"/><rect x="1185.05" y="21.05" width="0.95" height="1.75" fill="#555"/><rect x="1185.05" y="24.55" width="0.95" height="1.75" fill="#555"/><rect x="1185.05" y="28.05" width="0.95" height="1.75" fill="#555"/><rect x="1186.00" y="19.30" width="0.95" height="1.75" fill="#555"/><rect x="1186.00" y="22.80" width="0.95" height="1.75" fill="#555"/><rect x="1186.00" y="26.30" width="0.95" height="1.75" fill="#555"/><rect x="1186.00" y="29.80" width="0.95" height="1.75" fill="#555"/><rect x="1186.95" y="21.05" width="0.95" height="1.75" fill="#555"/><rect x="1186.95" y="24.55" width="0.95" height="1.75" fill="#555"/><rect x="1186.95" y="28.05" width="0.95" height="1.75" fill="#555"/><rect x="1187.90" y="19.30" width="0.95" height="1.75" fill="#555"/><rect x="1187.90" y="22.80" width="0.95" height="1.75" fill="#555"/><rect x="1187.90" y="26.30" width="0.95" height="1.75" fill="#555"/><rect x="1187.90" y="29.80" width="0.95" height="1.75" fill="#555"/>
</svg>
<div class="a tt" style="left:1200px;top:17px;letter-spacing:.3px">Opacidad</div>
<svg class="a" style="left:1275px;top:15px" width="19" height="19" viewBox="0 0 19 19">
 <circle cx="9.5" cy="9.5" r="6.3" fill="none" stroke="#333" stroke-width="1.4"/>
 <path d="M9.5 1 V4.5 M9.5 14.5 V18 M1 9.5 H4.5 M14.5 9.5 H18" stroke="#333" stroke-width="1.8"/>
 <circle cx="9.5" cy="9.5" r="1" fill="#333"/>
</svg>
<div class="a tt" style="left:1297px;top:17px">Posición</div>
<!-- dropdown -->
<div class="a" style="left:541px;top:42px;width:399px;height:177px;background:#fff;border:1px solid #dedede;border-radius:7px;box-shadow:0 2px 6px rgba(0,0,0,.10)"></div>
<svg class="a" style="left:541px;top:42px" width="399" height="177" viewBox="541 42 399 177">
<defs><clipPath id="lc"><rect x="541" y="48" width="399" height="161.6"/></clipPath></defs>
<rect x="550" y="156.1" width="182.2" height="34.7" rx="6" fill="#f7f8fa"/>
<rect x="747.3" y="51.3" width="181.7" height="34.1" rx="6" fill="#f0f0f0"/>
<rect x="737" y="53" width="1" height="155.5" fill="#d9d9d9"/>
<rect x="929" y="87.7" width="3" height="22.8" rx="1.5" fill="#555"/>
<g clip-path="url(#lc)">
<text x="560" y="71.7" style="font-family:'Liberation Sans';font-weight:bold;font-size:12px" stroke="#111" stroke-width=".5" fill="#111" textLength="31.4" lengthAdjust="spacingAndGlyphs">Chewy</text>
<path transform="translate(715.4 69.10)" d="M0 5.6 C-2.2 3.8 -6.6 0.9 -6.6 -2.2 C-6.6 -4.4 -5.1 -5.8 -3.3 -5.8 C-1.8 -5.8 -0.6 -4.9 0 -3.7 C0.6 -4.9 1.8 -5.8 3.3 -5.8 C5.1 -5.8 6.6 -4.4 6.6 -2.2 C6.6 0.9 2.2 3.8 0 5.6 Z" fill="none" stroke="#1e9fc0" stroke-width="1.25"/>
<text x="560" y="106.9" style="font-family:'Liberation Serif';font-weight:bold;font-style:italic;font-size:13px" fill="#222" textLength="49" lengthAdjust="spacingAndGlyphs">Courgette</text>
<path transform="translate(715.4 104.13)" d="M0 5.6 C-2.2 3.8 -6.6 0.9 -6.6 -2.2 C-6.6 -4.4 -5.1 -5.8 -3.3 -5.8 C-1.8 -5.8 -0.6 -4.9 0 -3.7 C0.6 -4.9 1.8 -5.8 3.3 -5.8 C5.1 -5.8 6.6 -4.4 6.6 -2.2 C6.6 0.9 2.2 3.8 0 5.6 Z" fill="none" stroke="#1e9fc0" stroke-width="1.25"/>
<text x="560" y="142.1" style="font-family:'Liberation Serif';font-style:italic;font-size:13px" fill="#333" textLength="60" lengthAdjust="spacingAndGlyphs">DancingScript</text>
<path transform="translate(715.4 139.16)" d="M0 5.6 C-2.2 3.8 -6.6 0.9 -6.6 -2.2 C-6.6 -4.4 -5.1 -5.8 -3.3 -5.8 C-1.8 -5.8 -0.6 -4.9 0 -3.7 C0.6 -4.9 1.8 -5.8 3.3 -5.8 C5.1 -5.8 6.6 -4.4 6.6 -2.2 C6.6 0.9 2.2 3.8 0 5.6 Z" fill="none" stroke="#1e9fc0" stroke-width="1.25"/>
<text x="560.4" y="176.8" style="font-family:'Liberation Serif';font-weight:bold;font-size:12.5px" fill="#111" textLength="119.4" lengthAdjust="spacingAndGlyphs">Diplomata</text>
<path transform="translate(715.4 174.19)" d="M0 5.6 C-2.2 3.8 -6.6 0.9 -6.6 -2.2 C-6.6 -4.4 -5.1 -5.8 -3.3 -5.8 C-1.8 -5.8 -0.6 -4.9 0 -3.7 C0.6 -4.9 1.8 -5.8 3.3 -5.8 C5.1 -5.8 6.6 -4.4 6.6 -2.2 C6.6 0.9 2.2 3.8 0 5.6 Z" fill="none" stroke="#1e9fc0" stroke-width="1.25"/>
<text x="560.4" y="211.2" style="font-family:'Liberation Serif';font-size:15px" fill="#222" textLength="89.6" lengthAdjust="spacingAndGlyphs">ElsieRegular</text>
<path transform="translate(715.4 209.22)" d="M0 5.6 C-2.2 3.8 -6.6 0.9 -6.6 -2.2 C-6.6 -4.4 -5.1 -5.8 -3.3 -5.8 C-1.8 -5.8 -0.6 -4.9 0 -3.7 C0.6 -4.9 1.8 -5.8 3.3 -5.8 C5.1 -5.8 6.6 -4.4 6.6 -2.2 C6.6 0.9 2.2 3.8 0 5.6 Z" fill="none" stroke="#1e9fc0" stroke-width="1.25"/>
<text x="756.7" y="71.8" fill="#333" textLength="41.6" lengthAdjust="spacingAndGlyphs" style="font-family:'Liberation Serif'"><tspan style="font-size:12px">C</tspan><tspan style="font-size:9.6px">INZEL</tspan></text>
<path transform="translate(912.7 69.10)" d="M0 5.6 C-2.2 3.8 -6.6 0.9 -6.6 -2.2 C-6.6 -4.4 -5.1 -5.8 -3.3 -5.8 C-1.8 -5.8 -0.6 -4.9 0 -3.7 C0.6 -4.9 1.8 -5.8 3.3 -5.8 C5.1 -5.8 6.6 -4.4 6.6 -2.2 C6.6 0.9 2.2 3.8 0 5.6 Z" fill="none" stroke="#1e9fc0" stroke-width="1.25"/>
<text x="756.7" y="106.6" style="font-family:'Liberation Sans';font-size:11px" fill="#333" textLength="33.8" lengthAdjust="spacingAndGlyphs">Cuprum</text>
<path transform="translate(912.7 104.13)" d="M0 5.6 C-2.2 3.8 -6.6 0.9 -6.6 -2.2 C-6.6 -4.4 -5.1 -5.8 -3.3 -5.8 C-1.8 -5.8 -0.6 -4.9 0 -3.7 C0.6 -4.9 1.8 -5.8 3.3 -5.8 C5.1 -5.8 6.6 -4.4 6.6 -2.2 C6.6 0.9 2.2 3.8 0 5.6 Z" fill="none" stroke="#1e9fc0" stroke-width="1.25"/>
<text x="756.7" y="141.7" style="font-family:'Liberation Sans';font-size:12px" fill="#222" textLength="31.9" lengthAdjust="spacingAndGlyphs">Delius</text>
<path transform="translate(912.7 139.16)" d="M0 5.6 C-2.2 3.8 -6.6 0.9 -6.6 -2.2 C-6.6 -4.4 -5.1 -5.8 -3.3 -5.8 C-1.8 -5.8 -0.6 -4.9 0 -3.7 C0.6 -4.9 1.8 -5.8 3.3 -5.8 C5.1 -5.8 6.6 -4.4 6.6 -2.2 C6.6 0.9 2.2 3.8 0 5.6 Z" fill="none" stroke="#1e9fc0" stroke-width="1.25"/>
<text x="756.5" y="176.9" style="font-family:'Liberation Sans';font-size:11.5px" fill="#333" textLength="39.4" lengthAdjust="spacingAndGlyphs">Economica</text>
<path transform="translate(912.7 174.19)" d="M0 5.6 C-2.2 3.8 -6.6 0.9 -6.6 -2.2 C-6.6 -4.4 -5.1 -5.8 -3.3 -5.8 C-1.8 -5.8 -0.6 -4.9 0 -3.7 C0.6 -4.9 1.8 -5.8 3.3 -5.8 C5.1 -5.8 6.6 -4.4 6.6 -2.2 C6.6 0.9 2.2 3.8 0 5.6 Z" fill="none" stroke="#1e9fc0" stroke-width="1.25"/>
<text x="756.5" y="211.2" style="font-family:'Liberation Serif';font-style:italic;font-size:13px" fill="#222" textLength="45" lengthAdjust="spacingAndGlyphs">GreatVibes</text>
<path transform="translate(912.7 209.22)" d="M0 5.6 C-2.2 3.8 -6.6 0.9 -6.6 -2.2 C-6.6 -4.4 -5.1 -5.8 -3.3 -5.8 C-1.8 -5.8 -0.6 -4.9 0 -3.7 C0.6 -4.9 1.8 -5.8 3.3 -5.8 C5.1 -5.8 6.6 -4.4 6.6 -2.2 C6.6 0.9 2.2 3.8 0 5.6 Z" fill="none" stroke="#1e9fc0" stroke-width="1.25"/>
</g></svg>
</body></html>
